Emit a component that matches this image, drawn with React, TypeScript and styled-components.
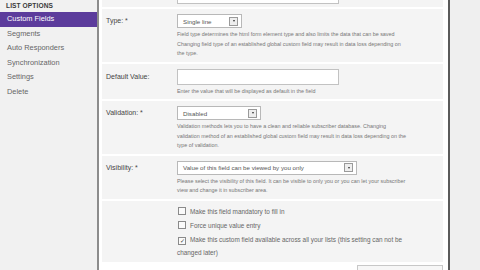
import React from 'react';
import styled, { createGlobalStyle } from 'styled-components';

const GlobalStyle = createGlobalStyle`
  html, body {
    margin: 0;
    padding: 0;
    background: #efefef;
    overflow: hidden;
  }
  body {
    font-family: "Liberation Sans", Arial, sans-serif;
  }
`;

const Page = styled.div`
  display: grid;
  grid-template-columns: 99px 351px 1fr;
  width: 480px;
  height: 270px;
  overflow: hidden;
`;

const Sidebar = styled.nav`
  background: #f1f1f1;
  border-right: 2px solid #8c8c8c;
  display: flex;
  flex-direction: column;
`;

const SideHeader = styled.div`
  height: 12px;
  line-height: 11px;
  padding-left: 6px;
  font-size: 6.6px;
  font-weight: bold;
  color: #3a3a3a;
  letter-spacing: 0.1px;
`;

const SideItem = styled.div<{ $active?: boolean }>`
  height: 14.5px;
  line-height: 14.5px;
  padding-left: 7px;
  font-size: 7.4px;
  color: ${p => (p.$active ? '#fff' : '#666')};
  background: ${p => (p.$active ? '#5c3c9c' : 'transparent')};
`;

const Content = styled.main`
  background: #fff;
  border-right: 2px solid #5a5a5a;
  padding: 0 5px 0 3px;
  overflow: hidden;
`;

const Rows = styled.div`
  margin-top: -17px;
  display: flex;
  flex-direction: column;
  gap: 2px;
`;

const Row = styled.div<{ $pt?: number }>`
  display: grid;
  grid-template-columns: 75px 1fr;
  background: #f4f4f4;
  padding: ${p => p.$pt ?? 5}px 0 3px 0;
`;

const Label = styled.div<{ $h?: number }>`
  padding-left: 4px;
  font-size: 7px;
  color: #444;
  line-height: ${p => p.$h ?? 14}px;
`;

const Field = styled.div`
  display: flex;
  flex-direction: column;
  align-items: flex-start;
`;

const TextInput = styled.div`
  width: 155px;
  height: 14px;
  border: 1px solid #c2c2c2;
  background: #fff;
  font-size: 6px;
  color: #666;
  line-height: 14px;
  padding-left: 5px;
  box-sizing: content-box;
`;

const Select = styled.div<{ $w: number }>`
  width: ${p => p.$w}px;
  height: 14px;
  box-sizing: border-box;
  border: 1px solid #b8b8b8;
  background: #fff;
  display: flex;
  align-items: center;
  justify-content: space-between;
  padding: 0 3px 0 5px;
  font-size: 6.2px;
  color: #555;
`;

const DropBtn = styled.span`
  width: 7px;
  height: 7px;
  border: 1px solid #9a9a9a;
  background: #eee;
  display: flex;
  align-items: center;
  justify-content: center;
  &::after {
    content: '';
    border-left: 1.5px solid transparent;
    border-right: 1.5px solid transparent;
    border-top: 2px solid #333;
  }
`;

const Help = styled.div`
  margin-top: 2px;
  font-size: 5.4px;
  line-height: 9.5px;
  color: #777;
  white-space: nowrap;
`;

const Checks = styled.div`
  display: flex;
  flex-direction: column;
`;

const CheckLine = styled.div`
  font-size: 6.4px;
  line-height: 14px;
  color: #666;
  white-space: nowrap;
`;

const Wrapped = styled.span`
  display: block;
  line-height: 13px;
  margin-top: -1px;
`;

const Box = styled.span`
  display: inline-flex;
  align-items: center;
  justify-content: center;
  width: 6px;
  height: 6px;
  border: 1px solid #8a8a8a;
  background: #fafafa;
  margin: 0 4px 0 1px;
  vertical-align: -1px;
  font-size: 6px;
  line-height: 6px;
  color: #444;
`;

const Footer = styled.div`
  display: flex;
  justify-content: flex-end;
  padding: 3px 0 0 0;
`;

const Button = styled.div`
  width: 84px;
  height: 14px;
  border: 1px solid #c8c8c8;
  background: #f7f7f7;
`;

const Gutter = styled.div`
  background: #efefef;
`;

export default function App() {
  return (
    <>
      <GlobalStyle />
      <Page>
        <Sidebar>
          <SideHeader>LIST OPTIONS</SideHeader>
          <SideItem $active>Custom Fields</SideItem>
          <SideItem>Segments</SideItem>
          <SideItem>Auto Responders</SideItem>
          <SideItem>Synchronization</SideItem>
          <SideItem>Settings</SideItem>
          <SideItem>Delete</SideItem>
        </Sidebar>

        <Content>
          <Rows>
            <Row>
              <Label $h={16}>Name: *</Label>
              <Field>
                <TextInput>Last Name</TextInput>
              </Field>
            </Row>

            <Row>
              <Label>Type: *</Label>
              <Field>
                <Select $w={65}>
                  Single line
                  <DropBtn />
                </Select>
                <Help>
                  Field type determines the html form element type and also limits the data that can be saved
                  <br />
                  Changing field type of an established global custom field may result in data loss depending on
                  <br />
                  the type.
                </Help>
              </Field>
            </Row>

            <Row>
              <Label $h={16}>Default Value:</Label>
              <Field>
                <TextInput />
                <Help>Enter the value that will be displayed as default in the field</Help>
              </Field>
            </Row>

            <Row>
              <Label>Validation: *</Label>
              <Field>
                <Select $w={84}>
                  Disabled
                  <DropBtn />
                </Select>
                <Help>
                  Validation methods lets you to have a clean and reliable subscriber database. Changing
                  <br />
                  validation method of an established global custom field may result in data loss depending on the
                  <br />
                  type of validation.
                </Help>
              </Field>
            </Row>

            <Row>
              <Label>Visibility: *</Label>
              <Field>
                <Select $w={180}>
                  Value of this field can be viewed by you only
                  <DropBtn />
                </Select>
                <Help>
                  Please select the visibility of this field. It can be visible to only you or you can let your subscriber
                  <br />
                  view and change it in subscriber area.
                </Help>
              </Field>
            </Row>

            <Row $pt={4}>
              <Label />
              <Checks>
                <CheckLine>
                  <Box />
                  Make this field mandatory to fill in
                </CheckLine>
                <CheckLine>
                  <Box />
                  Force unique value entry
                </CheckLine>
                <CheckLine>
                  <Box>✓</Box>
                  Make this custom field available across all your lists (this setting can not be
                  <Wrapped>changed later)</Wrapped>
                </CheckLine>
              </Checks>
            </Row>
          </Rows>
          <Footer>
            <Button />
          </Footer>
        </Content>

        <Gutter />
      </Page>
    </>
  );
}
